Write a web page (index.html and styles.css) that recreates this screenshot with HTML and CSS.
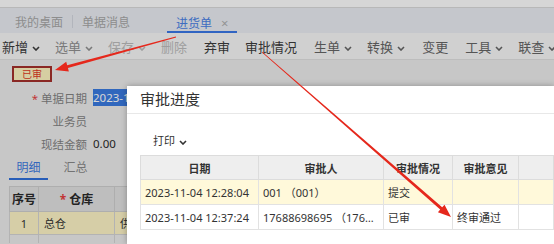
FILE: index.html
```html
<!DOCTYPE html>
<html lang="zh-CN">
<head>
    <meta charset="UTF-8">
    <title>进货单</title>
    <link rel="stylesheet" href="styles.css">
</head>
<body>
    <div class="topbar"></div>
    <div class="tabbar">
        <span class="tab">我的桌面</span>
        <span class="tab-sep"></span>
        <span class="tab">单据消息</span>
        <span class="tab active">进货单<span class="close">×</span></span>
    </div>

    <div class="toolbar">
        <span class="tb dark">新增<svg class="chev" viewBox="0 0 8 5"><path d="M1 1l3 3 3-3"/></svg></span>
        <span class="tb mid">选单<svg class="chev" viewBox="0 0 8 5"><path d="M1 1l3 3 3-3"/></svg></span>
        <span class="tb off">保存<svg class="chev" viewBox="0 0 8 5"><path d="M1 1l3 3 3-3"/></svg></span>
        <span class="tb off">删除</span>
        <span class="tb-sep"></span>
        <span class="tb dark">弃审</span>
        <span class="tb dark">审批情况</span>
        <span class="tb-sep"></span>
        <span class="tb">生单<svg class="chev" viewBox="0 0 8 5"><path d="M1 1l3 3 3-3"/></svg></span>
        <span class="tb">转换<svg class="chev" viewBox="0 0 8 5"><path d="M1 1l3 3 3-3"/></svg></span>
        <span class="tb-sep"></span>
        <span class="tb">变更</span>
        <span class="tb-sep"></span>
        <span class="tb">工具<svg class="chev" viewBox="0 0 8 5"><path d="M1 1l3 3 3-3"/></svg></span>
        <span class="tb">联查<svg class="chev" viewBox="0 0 8 5"><path d="M1 1l3 3 3-3"/></svg></span>
    </div>

    <div class="content">
        <div class="stamp">已审</div>

        <div class="form">
            <div class="frow">
                <span class="flabel"><i class="req">*</i>单据日期</span>
                <span class="fval"><span class="sel">2023-11-04</span></span>
            </div>
            <div class="frow">
                <span class="flabel">业务员</span>
                <span class="fval"></span>
            </div>
            <div class="frow">
                <span class="flabel">现结金额</span>
                <span class="fval">0.00</span>
            </div>
        </div>

        <div class="subtabs">
            <span class="stab on">明细</span>
            <span class="stab">汇总</span>
        </div>

        <table class="grid">
            <colgroup><col style="width:29px"><col style="width:76px"><col style="width:120px"><col></colgroup>
            <tr><th>序号</th><th><i class="req">*</i>仓库</th><th>供应商</th><th></th></tr>
            <tr class="hl"><td class="num">1</td><td>总仓</td><td>供应商</td><td></td></tr>
            <tr class="last"><td></td><td></td><td></td><td></td></tr>
        </table>
    </div>

    <div class="mask"></div>

    <div class="modal">
        <div class="mhead">审批进度</div>
        <div class="mtools">打印<svg class="chev" viewBox="0 0 8 5"><path d="M1 1l3 3 3-3"/></svg></div>
        <table class="mtable">
            <colgroup><col style="width:118px"><col style="width:125px"><col style="width:69px"><col style="width:66px"><col></colgroup>
            <tr><th>日期</th><th>审批人</th><th>审批情况</th><th>审批意见</th><th></th></tr>
            <tr class="hl"><td>2023-11-04 12:28:04</td><td>001 （001）</td><td>提交</td><td></td><td></td></tr>
            <tr><td>2023-11-04 12:37:24</td><td>17688698695 （17688698695）</td><td>已审</td><td>终审通过</td><td></td></tr>
        </table>
    </div>

    <svg class="arrows" viewBox="0 0 554 244">
        <polygon points="176.13,37.48 67.93,68.03 68.86,71.41 55,70 66.23,61.75 67.15,65.13 175.87,36.52"/>
        <polygon points="262.26,51.70 442.20,207.32 444.50,204.68 451,217 437.92,212.22 440.22,209.58 261.74,52.30"/>
    </svg>
</body>
</html>
```

FILE: styles.css
```css
body {
    margin: 0;
    width: 554px;
    height: 244px;
    overflow: hidden;
    position: relative;
    font-family: "Noto Sans", "Noto Sans CJK SC", sans-serif;
    color: #333;
    background: #eeeeee;
}

i {
    font-style: normal;
}

.topbar {
    height: 7px;
    background: #ffffff;
    border-bottom: 1px solid #dcdcdc;
}

.tabbar {
    height: 25px;
    display: flex;
    padding-left: 6px;
    background: #ebeef4;
    font-size: 12px;
}

.tab {
    padding: 7px 9px 0;
    line-height: 16px;
    color: #a8a8a8;
    border-bottom: 2px solid transparent;
    white-space: nowrap;
}

.tab-sep {
    width: 1px;
    height: 13px;
    margin-top: 7px;
    background: #d4d8e0;
}

.tab.active {
    margin-left: 28px;
    color: #4a82e6;
    border-bottom-color: #3a78e8;
}

.close {
    margin-left: 9px;
    color: #b0b0b0;
    font-size: 13px;
}

.toolbar {
    height: 24px;
    padding-top: 2px;
    display: flex;
    align-items: center;
    background: #f8f8f8;
    border-bottom: 1px solid #e2e2e2;
    font-size: 13px;
    line-height: 24px;
    color: #666;
}

.tb {
    display: flex;
    align-items: center;
    padding: 0 7.5px;
    white-space: nowrap;
}

.tb:first-child {
    padding-left: 2px;
}

.tb.dark {
    color: #3c3c3c;
}

.tb.mid {
    color: #919191;
}

.tb.off {
    color: #bdbdbd;
}

.tb-sep {
    width: 1px;
    height: 14px;
    margin: 0 1px;
    background: #dcdcdc;
}

.chev {
    width: 8px;
    height: 5px;
    margin: 2px 0 0 4px;
    fill: none;
    stroke: currentColor;
    stroke-width: 1.6;
}

.stamp {
    width: fit-content;
    margin: 6px 0 0 12px;
    padding: 0 8px;
    border: 2px solid #a5302c;
    background: #fff6c2;
    color: #e23a26;
    font-size: 10px;
    line-height: 12px;
}

.form {
    margin-top: 4px;
}

.frow {
    height: 23px;
    display: flex;
    align-items: center;
}

.flabel {
    width: 87px;
    text-align: right;
    color: #848484;
    font-size: 11.5px;
}

.req {
    color: #e64040;
    margin-right: 3px;
}

.fval {
    margin-left: 6px;
    font-size: 11.5px;
    color: #2a2a2a;
}

.sel {
    background: #3a7be2;
    color: #fff;
    padding: 1px 0;
}

.subtabs {
    display: flex;
    margin-left: 9px;
    font-size: 12px;
}

.stab {
    width: 39px;
    margin-right: 8px;
    padding: 5px 0 2px;
    line-height: 16px;
    text-align: center;
    color: #8a8a8a;
    border-bottom: 2px solid transparent;
}

.stab.on {
    color: #3f7be0;
    border-bottom-color: #2f6fdc;
}

.grid {
    margin: 6px 0 0 9px;
    width: 545px;
    border-collapse: collapse;
    table-layout: fixed;
    font-size: 11px;
}

.grid th {
    height: 24px;
    padding: 0;
    background: #e3e3e3;
    border: 1px solid #d0d0d0;
    font-size: 12px;
    color: #2a2a2a;
    white-space: nowrap;
}

.grid td {
    height: 22px;
    padding: 0 5px;
    border: 1px solid #d6d6d6;
    white-space: nowrap;
    overflow: hidden;
}

.grid .last td {
    height: 8px;
    border-bottom: 0;
}

.grid .hl td {
    background: #fff6c8;
}

.grid .num {
    text-align: center;
}

.mask {
    position: absolute;
    inset: 0;
    background: rgba(0, 0, 0, 0.16);
}

.modal {
    position: absolute;
    left: 127px;
    top: 86px;
    width: 427px;
    height: 158px;
    overflow: hidden;
    background: #fff;
    box-shadow: 0 0 6px rgba(0, 0, 0, 0.3);
}

.mhead {
    height: 27px;
    line-height: 27px;
    padding-left: 13px;
    border-bottom: 1px solid #e8e8e8;
    font-size: 15px;
    color: #333;
}

.mtools {
    display: flex;
    align-items: center;
    padding: 19px 0 6px 26px;
    line-height: 16px;
    font-size: 11px;
    color: #333;
}

.mtable {
    margin-left: 13px;
    width: 414px;
    border-collapse: collapse;
    table-layout: fixed;
    font-size: 11px;
}

.mtable th {
    height: 23px;
    padding: 0;
    background: #eeeeee;
    border: 1px solid #dcdcdc;
    font-weight: bold;
    color: #333;
}

.mtable td {
    height: 24px;
    padding: 0 4px;
    border: 1px solid #e2e2e2;
    white-space: nowrap;
    overflow: hidden;
    text-overflow: ellipsis;
    color: #333;
}

.mtable .hl td {
    background: #fff9da;
}

.arrows {
    position: absolute;
    left: 0;
    top: 0;
    width: 554px;
    height: 244px;
    fill: #e5281c;
}
```
